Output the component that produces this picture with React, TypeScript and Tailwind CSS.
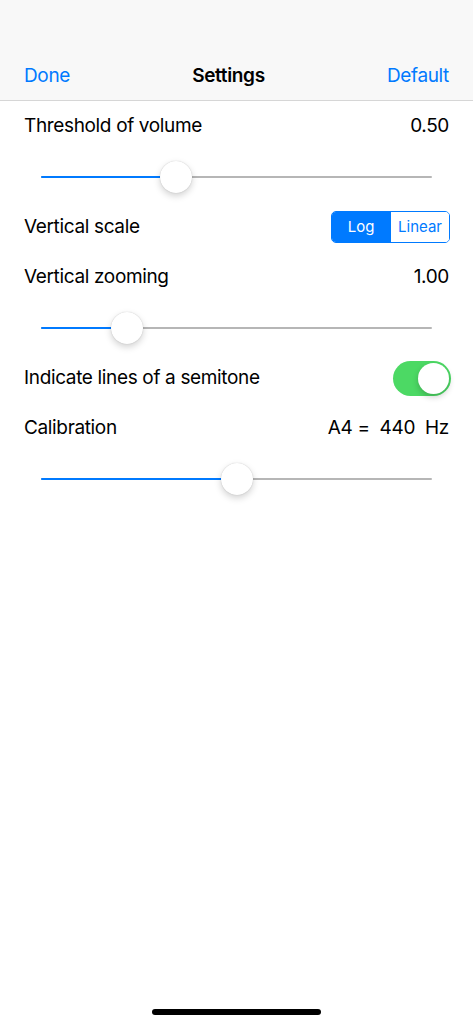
import { useState } from 'react';

const font = { fontFamily: 'Inter, "Noto Sans", sans-serif' };

function Slider({ value }: { value: number }) {
  // value is 0..1 along the track
  return (
    <div className="h-[50.4px] flex items-center px-[41px]">
      <div className="relative w-full h-[2px] bg-[#b6b6b6] rounded-full">
        <div className="absolute left-0 top-0 h-[2px] bg-[#007aff] rounded-full" style={{ width: `${value * 100}%` }} />
        <div
          className="absolute top-1/2 w-[32px] h-[32px] -ml-[16px] -mt-[16px] rounded-full bg-white shadow-[0_3px_7px_rgba(0,0,0,0.18),0_0_1px_rgba(0,0,0,0.25)]"
          style={{ left: `${value * 100}%` }}
        />
      </div>
    </div>
  );
}

function Row({ label, children }: { label: string; children?: React.ReactNode }) {
  return (
    <div className="h-[50.4px] flex items-center justify-between px-[24px] text-[19px] tracking-[-0.35px] text-black">
      <span>{label}</span>
      {children}
    </div>
  );
}

export default function App() {
  const [scale, setScale] = useState<'log' | 'linear'>('log');
  const [semitone, setSemitone] = useState(true);

  return (
    <div className="w-[473px] h-[1024px] bg-white flex flex-col relative" style={font}>
      <div className="bg-[#f8f8f8] border-b border-[#d6d6d6] pt-[52px]">
        <div className="h-[48px] flex items-center justify-between px-[24px] text-[19px] tracking-[-0.35px]">
          <span className="text-[#007aff]">Done</span>
          <span className="font-semibold text-black">Settings</span>
          <span className="text-[#007aff]">Default</span>
        </div>
      </div>

      <Row label="Threshold of volume">
        <span>0.50</span>
      </Row>
      <Slider value={0.344} />

      <Row label="Vertical scale">
        <div className="flex h-[32px] w-[119px] mr-[-1px] border border-[#007aff] rounded-[5px] overflow-hidden text-[15px] tracking-normal">
          <button
            onClick={() => setScale('log')}
            className={scale === 'log' ? 'flex-1 bg-[#007aff] text-white' : 'flex-1 bg-white text-[#007aff]'}
          >
            Log
          </button>
          <button
            onClick={() => setScale('linear')}
            className={scale === 'linear' ? 'flex-1 bg-[#007aff] text-white border-l border-[#007aff]' : 'flex-1 bg-white text-[#007aff] border-l border-[#007aff]'}
          >
            Linear
          </button>
        </div>
      </Row>

      <Row label="Vertical zooming">
        <span>1.00</span>
      </Row>
      <Slider value={0.22} />

      <Row label="Indicate lines of a semitone">
        <button
          onClick={() => setSemitone(!semitone)}
          className={`w-[58px] h-[35px] mr-[-2px] rounded-full p-[2px] flex ${semitone ? 'bg-[#4cd964] justify-end' : 'bg-[#e5e5ea] justify-start'}`}
        >
          <span className="w-[31px] h-[31px] rounded-full bg-white shadow-[0_3px_6px_rgba(0,0,0,0.2)]" />
        </button>
      </Row>

      <Row label="Calibration">
        <span className="whitespace-pre">A4 =  440  Hz</span>
      </Row>
      <Slider value={0.5} />

      <div className="flex-1" />
      <div className="flex justify-center pb-[9px]">
        <div className="w-[169px] h-[6px] rounded-full bg-black" />
      </div>
    </div>
  );
}
